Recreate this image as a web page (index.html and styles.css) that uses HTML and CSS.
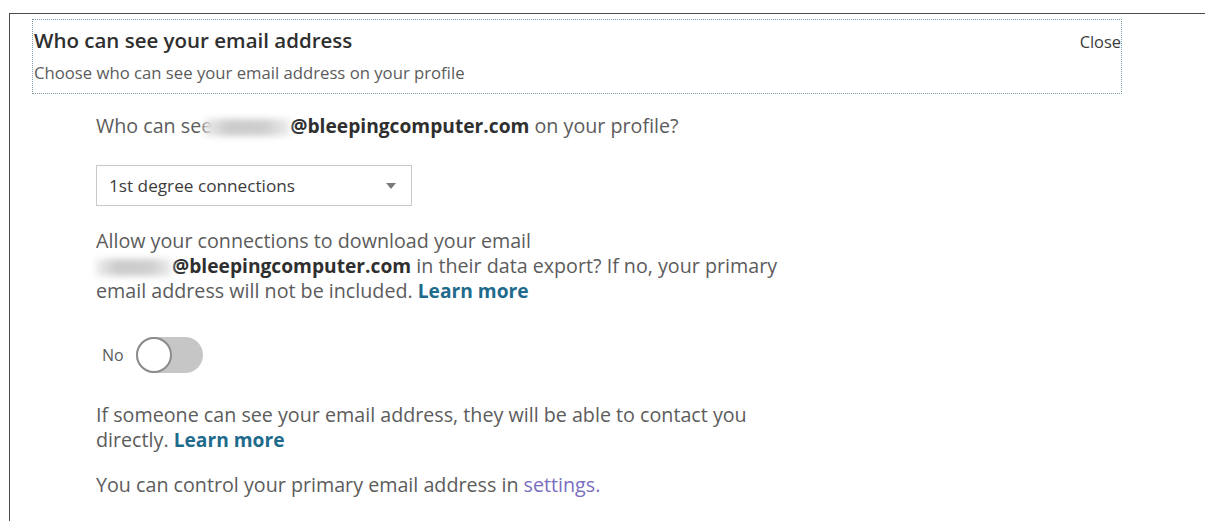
FILE: index.html
```html
<!DOCTYPE html>
<html lang="en">
<head>
<meta charset="utf-8">
<title>Email visibility</title>
<link rel="stylesheet" href="styles.css">
</head>
<body>
<div class="frame">
  <header class="panel-head">
    <div class="head-row">
      <h2 class="head-title">Who can see your email address</h2>
      <a class="close-link">Close</a>
    </div>
    <p class="head-sub">Choose who can see your email address on your profile</p>
  </header>

  <section class="panel-body">
    <p class="question">Who can see<span class="masked masked-inline"></span><b class="addr">@bleepingcomputer.com</b> on your profile?</p>

    <div class="select">
      <span class="select-value">1st degree connections</span>
      <span class="caret"></span>
    </div>

    <p class="para">Allow your connections to download your email<br><span class="masked masked-line"></span><b class="addr">@bleepingcomputer.com</b> in their data export? If no, your primary<br>email address will not be included. <a class="learn">Learn more</a></p>

    <div class="toggle-row">
      <span class="toggle-label">No</span>
      <span class="toggle"><span class="knob"></span></span>
    </div>

    <p class="para">If someone can see your email address, they will be able to contact you<br>directly. <a class="learn">Learn more</a></p>

    <p class="para foot">You can control your primary email address in <a class="settings">settings.</a></p>
  </section>
</div>
</body>
</html>
```

FILE: styles.css
```css
html, body {
  margin: 0;
  padding: 0;
  background: #fff;
}

body {
  font-family: "Open Sans", "Noto Sans", sans-serif;
  color: #5c5c5c;
  height: 521px;
  overflow: hidden;
}

.frame {
  margin: 13px 0 0 9px;
  border-top: 1px solid #4a4a4a;
  border-left: 1px solid #4a4a4a;
  height: 520px;
  box-sizing: border-box;
  padding-top: 5px;
}

/* dialog header with focus outline */
.panel-head {
  margin-left: 22px;
  width: 1090px;
  height: 75px;
  box-sizing: border-box;
  border: 1px dotted #7f9aa6;
  padding: 7px 0 0 1px;
}

.head-row {
  display: flex;
  justify-content: space-between;
  align-items: baseline;
}

.head-title {
  margin: 0;
  font-size: 20.5px;
  font-weight: 600;
  color: #2f2f2f;
  line-height: 26px;
}

.close-link {
  font-size: 16.4px;
  color: #3c3c3c;
}

.head-sub {
  margin: 9px 0 0;
  font-size: 16.7px;
  line-height: 22px;
  color: #5c5c5c;
}

/* settings body */
.panel-body {
  padding-left: 86px;
}

.question {
  margin: 19px 0 0;
  font-size: 19.7px;
  line-height: 25px;
}

.addr {
  color: #2f2f2f;
  font-weight: 700;
  font-size: 19.2px;
}

/* blurred-out local part of the address */
.masked {
  display: inline-block;
  height: 17px;
  vertical-align: -3px;
  background: linear-gradient(90deg, rgba(236, 236, 236, 0.9), #cbcbcb 28%, #cfcfcf 72%, #eeeeee);
  filter: blur(3px);
}

.masked-inline {
  margin-left: -8px;
  width: 86px;
}

.masked-line {
  width: 76px;
}

.select {
  margin-top: 27px;
  width: 316px;
  height: 41px;
  box-sizing: border-box;
  border: 1px solid #c9c9c9;
  display: flex;
  align-items: center;
  justify-content: space-between;
  padding: 0 15px 0 12px;
}

.select-value {
  font-size: 17.2px;
  color: #3c3c3c;
}

.caret {
  width: 0;
  height: 0;
  border-left: 5px solid transparent;
  border-right: 5px solid transparent;
  border-top: 6px solid #7a7a7a;
}

.para {
  margin: 0;
  font-size: 19.7px;
  line-height: 25px;
}

.select + .para {
  margin-top: 22px;
}

.learn {
  color: #1e6b8c;
  font-weight: 700;
  font-size: 19.2px;
}

.settings {
  color: #7a6dbf;
}

.toggle-row {
  display: flex;
  align-items: center;
  gap: 12px;
  padding-left: 6px;
  margin: 34px 0 29px;
}

.toggle-label {
  font-size: 16px;
  color: #5c5c5c;
}

.toggle {
  position: relative;
  width: 67px;
  height: 36px;
  border-radius: 18px;
  background: #c6c6c6;
}

.knob {
  position: absolute;
  left: 0;
  top: 0;
  width: 36px;
  height: 36px;
  border-radius: 50%;
  background: #fff;
  border: 2px solid #8c8c8c;
  box-sizing: border-box;
}

.foot {
  margin-top: 20px;
}
```
